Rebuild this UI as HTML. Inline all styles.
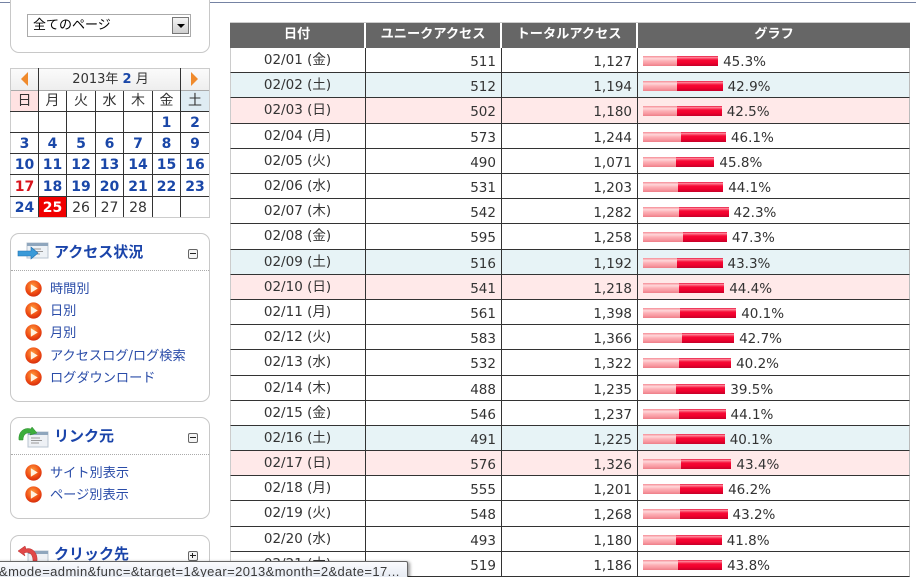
<!DOCTYPE html>
<html lang="ja"><head><meta charset="utf-8"><title>アクセス状況</title>
<style>
html,body{margin:0;padding:0;background:#fff;overflow:hidden;width:916px;height:577px}
#wrap{width:916px;height:577px;overflow:hidden;position:relative;font-family:"DejaVu Sans","Noto Sans CJK JP",sans-serif;font-size:13.5px;color:#333}
.a{position:absolute}
#top{left:0;top:2px;width:916px;height:1px;background:#7583a3}
.panel{position:absolute;left:10px;width:198px;border:1px solid #c8c8c8;border-radius:9px;background:#fff;box-sizing:content-box}
.sel{left:27px;top:14px;width:162px;height:21px;border:1px solid #aaa;font-size:13px;line-height:22px;color:#000;text-indent:5px}
.btn{left:172px;top:17px;width:15px;height:15px;border:1px solid #777;background:linear-gradient(#f4f4f4,#cfcfcf)}
.btn:after{content:"";position:absolute;left:4px;top:6px;border:4px solid transparent;border-top:4px solid #000;border-bottom:0}
.cl{position:absolute;text-align:center;font-weight:bold;color:#1a47a8;font-size:14px;line-height:24px}
.cg{color:#333;font-weight:normal}
.v{position:absolute;background:#333;width:1px}
.h{position:absolute;background:#333;height:1px;left:10px;width:199px}
.t{position:absolute;left:54px;font-weight:bold;font-size:15px;color:#1a44aa;line-height:20px;white-space:nowrap}
.dot{position:absolute;left:11px;width:198px;border-top:1px dotted #aaa;height:0}
.tg{position:absolute;left:188px;width:8px;height:8px;border:1px solid #666;border-radius:2px;background:#f4f4f4;font-size:0}
.tg:before{content:"";position:absolute;left:1px;top:3px;width:6px;height:1px;background:#222}
.tg.p:after{content:"";position:absolute;left:3px;top:1px;width:1px;height:5px;background:#222}
.it{position:absolute;left:50px;color:#2a4ca8;font-size:13.2px;line-height:22px;white-space:nowrap}
.ic{position:absolute;left:25px;width:17px;height:17px}
#tb{left:230px;top:22.1px;width:680px}
#hd{height:25px;background:#666;color:#fff;font-weight:bold;display:flex;border-top:1px solid #ccc;line-height:24px;text-align:center;font-size:13.2px}
#hd div{box-sizing:border-box;border-right:2px solid #fff}
#hd div:last-child{border-right:0}
.r{height:25.2px;box-sizing:border-box;border-bottom:1px solid #333;display:flex;border-left:1px solid #ccc;border-right:1px solid #bbb}
.r>div{box-sizing:border-box}
.d{width:135px;text-align:center;border-right:1px solid #333;padding-right:1px;line-height:25px}
.n{width:136px;text-align:right;padding-right:5px;border-right:1px solid #333;line-height:28px}
.g{flex:1;position:relative;padding-left:5px;line-height:28px;display:flex;white-space:nowrap}
.bar{display:inline-block;height:10px;margin-top:8px;margin-right:5px;background:linear-gradient(#e3002c 0,#ff8a9c 12%,#f60a35 40%,#f0002c 70%,#c4002a 100%);position:relative;flex:none}
.bar i{position:absolute;left:0;top:0;height:10px;background:linear-gradient(#f58c96 0,#ffd8da 25%,#fdb0b6 50%,#f89aa2 75%,#ee7e88 100%)}
.sa{background:#e7f3f6}.su{background:#ffe9e9}
#tip{left:-6px;top:561px;width:412px;height:16px;background:linear-gradient(#fafbfd,#e6ebf3);border:1px solid #666;border-bottom:0;border-radius:0 2px 0 0;font-size:13px;line-height:20px;color:#3a3a3a;white-space:nowrap;box-shadow:2px 1px 3px rgba(0,0,0,.4);text-indent:4px;overflow:hidden;font-family:"Liberation Sans","DejaVu Sans",sans-serif;letter-spacing:.4px}
</style></head><body><div id="wrap">
<div class="a" id="top"></div>

<div class="panel" style="top:-10px;height:61px"></div>
<div class="a sel">全てのページ</div><div class="a btn"></div>

<!-- calendar -->
<div class="a" style="left:10px;top:68px;width:198px;height:148px;border:1px solid #ccc;background:#fff"></div>
<div class="a" style="left:11px;top:69px;width:198px;height:21px;background:linear-gradient(#fbfbfb,#eee)"></div>
<div class="a" style="left:11px;top:91px;width:27px;height:20px;background:#ffe2e2"></div>
<div class="a" style="left:181px;top:91px;width:28px;height:20px;background:#dfecf3"></div>
<div class="a" style="left:21px;top:72px;border:7px solid transparent;border-left:0;border-right:7px solid #f08a2c"></div>
<div class="a" style="left:191px;top:72px;border:7px solid transparent;border-right:0;border-left:7px solid #f08a2c"></div>
<div class="a" style="left:40px;top:69px;width:141px;text-align:center;line-height:22px;font-size:13px;color:#333">2013年 <b style="color:#1a47a8">2</b> 月</div>
<div class="h" style="top:90px;background:#aaa;left:11px;width:198px"></div>
<div class="h" style="top:111px"></div><div class="h" style="top:132px"></div><div class="h" style="top:153px"></div><div class="h" style="top:174px"></div><div class="h" style="top:196px"></div>
<div class="v" style="left:38px;top:68px;height:149px"></div>
<div class="v" style="left:66px;top:91px;height:126px"></div>
<div class="v" style="left:95px;top:91px;height:126px"></div>
<div class="v" style="left:123px;top:91px;height:126px"></div>
<div class="v" style="left:152px;top:91px;height:126px"></div>
<div class="v" style="left:180px;top:68px;height:149px"></div>

<div class="cl cg" style="left:11px;top:89px;width:27px">日</div><div class="cl cg" style="left:39px;top:89px;width:27px">月</div><div class="cl cg" style="left:67px;top:89px;width:28px">火</div><div class="cl cg" style="left:96px;top:89px;width:27px">水</div><div class="cl cg" style="left:124px;top:89px;width:28px">木</div><div class="cl cg" style="left:153px;top:89px;width:27px">金</div><div class="cl cg" style="left:181px;top:89px;width:28px">土</div>

<div class="cl" style="left:153px;top:111px;width:27px">1</div><div class="cl" style="left:181px;top:111px;width:28px">2</div>
<div class="cl" style="left:11px;top:132px;width:27px">3</div><div class="cl" style="left:39px;top:132px;width:27px">4</div><div class="cl" style="left:67px;top:132px;width:28px">5</div><div class="cl" style="left:96px;top:132px;width:27px">6</div><div class="cl" style="left:124px;top:132px;width:28px">7</div><div class="cl" style="left:153px;top:132px;width:27px">8</div><div class="cl" style="left:181px;top:132px;width:28px">9</div>
<div class="cl" style="left:11px;top:153px;width:27px">10</div><div class="cl" style="left:39px;top:153px;width:27px">11</div><div class="cl" style="left:67px;top:153px;width:28px">12</div><div class="cl" style="left:96px;top:153px;width:27px">13</div><div class="cl" style="left:124px;top:153px;width:28px">14</div><div class="cl" style="left:153px;top:153px;width:27px">15</div><div class="cl" style="left:181px;top:153px;width:28px">16</div>
<div class="cl" style="left:11px;top:175px;width:27px;color:#d8141c">17</div><div class="cl" style="left:39px;top:175px;width:27px">18</div><div class="cl" style="left:67px;top:175px;width:28px">19</div><div class="cl" style="left:96px;top:175px;width:27px">20</div><div class="cl" style="left:124px;top:175px;width:28px">21</div><div class="cl" style="left:153px;top:175px;width:27px">22</div><div class="cl" style="left:181px;top:175px;width:28px">23</div>
<div class="cl" style="left:11px;top:196px;width:27px">24</div><div class="a" style="left:39px;top:197px;width:27px;height:20px;background:#f00000"></div><div class="cl" style="left:39px;top:196px;width:27px;color:#fff">25</div><div class="cl cg" style="left:67px;top:196px;width:28px">26</div><div class="cl cg" style="left:96px;top:196px;width:27px">27</div><div class="cl cg" style="left:124px;top:196px;width:28px">28</div>

<!-- panel: access -->
<div class="panel" style="top:233px;height:167px"></div>
<svg class="a" style="left:17px;top:241px" width="33" height="24" viewBox="0 0 33 24"><rect x="10" y="2" width="21" height="15" fill="#eef2f6" stroke="#b8c4d0"/><rect x="10" y="2" width="21" height="3" fill="#8fa6bd"/><path d="M16 8h8M16 10.500h10M16 13h7" stroke="#999"/><path d="M1 10h13V6l7 6-7 6v-3H1z" fill="#3a9ad8" stroke="#1f6fb0" stroke-width=".6"/></svg>
<div class="t" style="top:242px">アクセス状況</div>
<div class="tg" style="top:249px"></div>
<div class="dot" style="top:270px"></div>
<svg width="0" height="0" style="position:absolute"><defs><radialGradient id="o" cx=".45" cy=".35" r=".75"><stop offset="0" stop-color="#ff9a3c"/><stop offset=".6" stop-color="#ee4a12"/><stop offset="1" stop-color="#c8200a"/></radialGradient></defs></svg>
<svg class="ic" style="top:280px" viewBox="0 0 16 16"><circle cx="8" cy="8" r="7.700" fill="url(#o)"/><path d="M5.500 4v8L12 8z" fill="#fff3e0"/></svg>
<div class="it" style="top:279px">時間別</div>
<svg class="ic" style="top:302px" viewBox="0 0 16 16"><circle cx="8" cy="8" r="7.700" fill="url(#o)"/><path d="M5.500 4v8L12 8z" fill="#fff3e0"/></svg>
<div class="it" style="top:301px">日別</div>
<svg class="ic" style="top:324px" viewBox="0 0 16 16"><circle cx="8" cy="8" r="7.700" fill="url(#o)"/><path d="M5.500 4v8L12 8z" fill="#fff3e0"/></svg>
<div class="it" style="top:323px">月別</div>
<svg class="ic" style="top:347px" viewBox="0 0 16 16"><circle cx="8" cy="8" r="7.700" fill="url(#o)"/><path d="M5.500 4v8L12 8z" fill="#fff3e0"/></svg>
<div class="it" style="top:346px">アクセスログ/ログ検索</div>
<svg class="ic" style="top:369px" viewBox="0 0 16 16"><circle cx="8" cy="8" r="7.700" fill="url(#o)"/><path d="M5.500 4v8L12 8z" fill="#fff3e0"/></svg>
<div class="it" style="top:368px">ログダウンロード</div>

<!-- panel: referrer -->
<div class="panel" style="top:417px;height:100px"></div>
<svg class="a" style="left:17px;top:425px" width="33" height="24" viewBox="0 0 33 24"><rect x="11" y="7" width="20" height="15" fill="#eef1f5" stroke="#b8c4d0"/><rect x="11" y="7" width="20" height="3" fill="#8fa6bd"/><path d="M14 13h9M14 15.500h11M14 18h8" stroke="#999"/><path d="M2 15C1 6 8 2 14 4l1-2 5 6-7 2 1-2C9 7 6 10 6 15z" fill="#3cae3c" stroke="#2a8a2a" stroke-width=".5"/></svg>
<div class="t" style="top:426px">リンク元</div>
<div class="tg" style="top:433px"></div>
<div class="dot" style="top:454px"></div>
<svg class="ic" style="top:464px" viewBox="0 0 16 16"><circle cx="8" cy="8" r="7.700" fill="url(#o)"/><path d="M5.500 4v8L12 8z" fill="#fff3e0"/></svg>
<div class="it" style="top:463px">サイト別表示</div>
<svg class="ic" style="top:486px" viewBox="0 0 16 16"><circle cx="8" cy="8" r="7.700" fill="url(#o)"/><path d="M5.500 4v8L12 8z" fill="#fff3e0"/></svg>
<div class="it" style="top:485px">ページ別表示</div>

<!-- panel: click -->
<div class="panel" style="top:535px;height:60px"></div>
<svg class="a" style="left:17px;top:544px" width="33" height="24" viewBox="0 0 33 24"><rect x="11" y="7" width="20" height="15" fill="#eef1f5" stroke="#b8c4d0"/><rect x="11" y="7" width="20" height="3" fill="#8fa6bd"/><path d="M20 17C21 8 14 3 9 5L8 2 1 7l7 5-1-3c5-2 9 1 9 8z" fill="#e04848" stroke="#b82a2a" stroke-width=".5"/></svg>
<div class="t" style="top:544px">クリック先</div>
<div class="tg p" style="top:551px"></div>

<!-- table -->
<div class="a" id="tb">
<div id="hd"><div style="width:136px">日付</div><div style="width:136px">ユニークアクセス</div><div style="width:136px">トータルアクセス</div><div style="flex:1">グラフ</div></div>
<div class="r"><div class="d">02/01 (金)</div><div class="n">511</div><div class="n">1,127</div><div class="g"><span class="bar" style="width:75.1px"><i style="width:34.1px"></i></span>45.3%</div></div>
<div class="r sa"><div class="d">02/02 (土)</div><div class="n">512</div><div class="n">1,194</div><div class="g"><span class="bar" style="width:79.6px"><i style="width:34.1px"></i></span>42.9%</div></div>
<div class="r su"><div class="d">02/03 (日)</div><div class="n">502</div><div class="n">1,180</div><div class="g"><span class="bar" style="width:78.7px"><i style="width:33.5px"></i></span>42.5%</div></div>
<div class="r"><div class="d">02/04 (月)</div><div class="n">573</div><div class="n">1,244</div><div class="g"><span class="bar" style="width:82.9px"><i style="width:38.2px"></i></span>46.1%</div></div>
<div class="r"><div class="d">02/05 (火)</div><div class="n">490</div><div class="n">1,071</div><div class="g"><span class="bar" style="width:71.4px"><i style="width:32.7px"></i></span>45.8%</div></div>
<div class="r"><div class="d">02/06 (水)</div><div class="n">531</div><div class="n">1,203</div><div class="g"><span class="bar" style="width:80.2px"><i style="width:35.4px"></i></span>44.1%</div></div>
<div class="r"><div class="d">02/07 (木)</div><div class="n">542</div><div class="n">1,282</div><div class="g"><span class="bar" style="width:85.5px"><i style="width:36.1px"></i></span>42.3%</div></div>
<div class="r"><div class="d">02/08 (金)</div><div class="n">595</div><div class="n">1,258</div><div class="g"><span class="bar" style="width:83.9px"><i style="width:39.7px"></i></span>47.3%</div></div>
<div class="r sa"><div class="d">02/09 (土)</div><div class="n">516</div><div class="n">1,192</div><div class="g"><span class="bar" style="width:79.5px"><i style="width:34.4px"></i></span>43.3%</div></div>
<div class="r su"><div class="d">02/10 (日)</div><div class="n">541</div><div class="n">1,218</div><div class="g"><span class="bar" style="width:81.2px"><i style="width:36.1px"></i></span>44.4%</div></div>
<div class="r"><div class="d">02/11 (月)</div><div class="n">561</div><div class="n">1,398</div><div class="g"><span class="bar" style="width:93.2px"><i style="width:37.4px"></i></span>40.1%</div></div>
<div class="r"><div class="d">02/12 (火)</div><div class="n">583</div><div class="n">1,366</div><div class="g"><span class="bar" style="width:91.1px"><i style="width:38.9px"></i></span>42.7%</div></div>
<div class="r"><div class="d">02/13 (水)</div><div class="n">532</div><div class="n">1,322</div><div class="g"><span class="bar" style="width:88.1px"><i style="width:35.5px"></i></span>40.2%</div></div>
<div class="r"><div class="d">02/14 (木)</div><div class="n">488</div><div class="n">1,235</div><div class="g"><span class="bar" style="width:82.3px"><i style="width:32.5px"></i></span>39.5%</div></div>
<div class="r"><div class="d">02/15 (金)</div><div class="n">546</div><div class="n">1,237</div><div class="g"><span class="bar" style="width:82.5px"><i style="width:36.4px"></i></span>44.1%</div></div>
<div class="r sa"><div class="d">02/16 (土)</div><div class="n">491</div><div class="n">1,225</div><div class="g"><span class="bar" style="width:81.7px"><i style="width:32.7px"></i></span>40.1%</div></div>
<div class="r su"><div class="d">02/17 (日)</div><div class="n">576</div><div class="n">1,326</div><div class="g"><span class="bar" style="width:88.4px"><i style="width:38.4px"></i></span>43.4%</div></div>
<div class="r"><div class="d">02/18 (月)</div><div class="n">555</div><div class="n">1,201</div><div class="g"><span class="bar" style="width:80.1px"><i style="width:37px"></i></span>46.2%</div></div>
<div class="r"><div class="d">02/19 (火)</div><div class="n">548</div><div class="n">1,268</div><div class="g"><span class="bar" style="width:84.5px"><i style="width:36.5px"></i></span>43.2%</div></div>
<div class="r"><div class="d">02/20 (水)</div><div class="n">493</div><div class="n">1,180</div><div class="g"><span class="bar" style="width:78.7px"><i style="width:32.9px"></i></span>41.8%</div></div>
<div class="r"><div class="d">02/21 (木)</div><div class="n">519</div><div class="n">1,186</div><div class="g"><span class="bar" style="width:79.1px"><i style="width:34.6px"></i></span>43.8%</div></div>
</div>

<div class="a" id="tip">&amp;mode=admin&amp;func=&amp;target=1&amp;year=2013&amp;month=2&amp;date=17...</div>
</div></body></html>
